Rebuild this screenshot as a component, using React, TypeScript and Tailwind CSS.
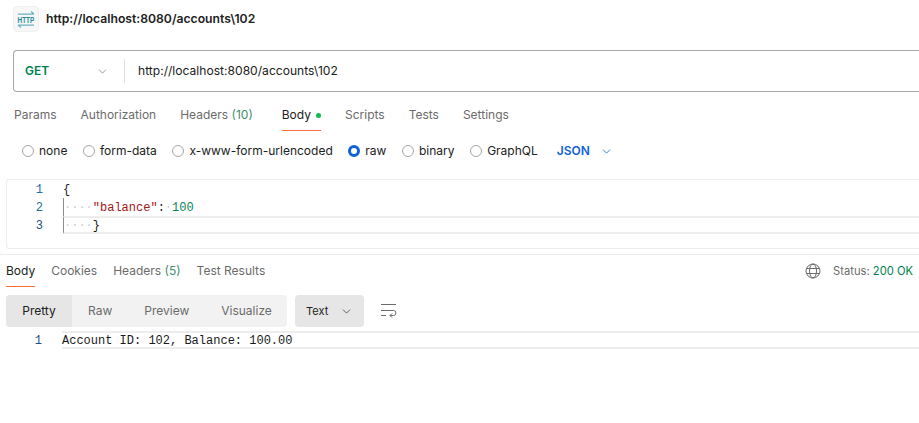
import { ChevronDown } from "lucide-react";

const requestTabs = ["Params", "Authorization", "Headers", "Body", "Scripts", "Tests", "Settings"];

const bodyTypes = ["none", "form-data", "x-www-form-urlencoded", "raw", "binary", "GraphQL"];

function HttpIcon() {
  return (
    <div className="flex h-[26px] w-[26px] items-center justify-center rounded-[4px] border border-[#efefef] bg-[#f7f7f7]">
      <svg width="18" height="18" viewBox="0 0 18 18" fill="none" stroke="#6bb3c0" strokeWidth="1.25">
        <path d="M1 4h16M14 1.500l3 2.500M1 15h16M4 17.500L1 15" />
        <text
          transform="translate(0.600 13) scale(1 1.35)"
          fontSize="6.400"
          fontWeight="700"
          fontFamily="Liberation Sans"
          stroke="none"
          fill="#2a8a9c"
        >
          HTTP
        </text>
      </svg>
    </div>
  );
}

function Radio({ checked }: { checked?: boolean }) {
  return checked ? (
    <span className="h-3 w-3 rounded-full border-[3.5px] border-[#0f62d6] bg-white" />
  ) : (
    <span className="h-3 w-3 rounded-full border border-[#a6a6a6] bg-white" />
  );
}

function WrapIcon() {
  return (
    <svg width="16" height="14" viewBox="0 0 16 14" fill="none" stroke="#6b6b6b" strokeWidth="1">
      <path d="M0 0.500h15M0 6.500h12.500a2.500 2.500 0 0 1 0 5H9M11 9.500l-2 2 2 2M0 11.500h5" />
    </svg>
  );
}

function GlobeIcon() {
  return (
    <svg width="16" height="16" viewBox="0 0 16 16" fill="none" stroke="#6b6b6b" strokeWidth="1">
      <circle cx="8" cy="8" r="7" />
      <ellipse cx="8" cy="8" rx="3.500" ry="7" />
      <path d="M1.500 5.500h13M1.500 10.500h13" />
    </svg>
  );
}

export default function App() {
  return (
    <div className="h-[423px] w-[919px] overflow-hidden bg-white font-['Inter',sans-serif] text-xs text-[#6b6b6b]">
      <div className="flex items-center gap-[7px] pl-[13px] pt-[6px]">
        <HttpIcon />
        <span className="text-[12.2px] font-semibold text-[#212121]">http://localhost:8080/accounts\102</span>
      </div>

      <div className="ml-[13px] mt-[18px] flex h-[42px] items-center rounded-l-[4px] border border-r-0 border-[#a8a8a8]">
        <span className="ml-[11px] w-[71px] font-semibold text-[#007f4f]">GET</span>
        <ChevronDown size={13} strokeWidth={1.25} className="text-[#6b6b6b]" />
        <div className="ml-[15px] h-[24px] w-px bg-[#e0e0e0]" />
        <span className="ml-[13px] text-[12.1px] text-[#212121]">http://localhost:8080/accounts\102</span>
      </div>

      <div className="mt-[11px] flex h-[28px] items-center pl-[14px]">
        {requestTabs.map((tab) => (
          <div
            key={tab}
            className={
              tab === "Body"
                ? "relative ml-[29px] flex h-full items-center pb-[4px]"
                : tab === "Params"
                  ? "relative flex h-full items-center pb-[4px]"
                  : "relative ml-[24px] flex h-full items-center pb-[4px]"
            }
          >
            {tab === "Body" ? (
              <>
                <span className="text-[#212121]">Body</span>
                <span className="ml-[5px] h-[5px] w-[5px] rounded-full bg-[#0cbb52]" />
                <span className="absolute bottom-0 left-0 right-0 h-px bg-[#ff6c37]" />
              </>
            ) : tab === "Headers" ? (
              <span>
                Headers <span className="text-[#3f8f6f]">(10)</span>
              </span>
            ) : (
              <span>{tab}</span>
            )}
          </div>
        ))}
      </div>

      <div className="mt-[12px] flex h-[16px] items-center pl-[22px]">
        <div className="flex items-center gap-[15.6px]">
          {bodyTypes.map((type) => (
            <label key={type} className="flex items-center gap-[5px] text-[#212121]">
              <Radio checked={type === "raw"} />
              {type}
            </label>
          ))}
        </div>
        <span className="ml-[19px] font-semibold text-[#0f62d6]">JSON</span>
        <ChevronDown size={13} strokeWidth={1.5} className="ml-[10px] text-[#0f62d6]" />
      </div>

      <div className="ml-[6px] mt-[20px] h-[70px] rounded-l-[3px] border border-r-0 border-[#ededed] font-['Liberation_Mono',monospace] text-xs leading-[20px]">
        <div className="flex h-[18px]">
          <span className="w-[36px] text-right text-[#1e6fa0]">1</span>
          <span className="ml-[20px] text-[#1a1a1a]">{"{"}</span>
        </div>
        <div className="flex h-[18px]">
          <span className="w-[36px] text-right text-[#1e6fa0]">2</span>
          <div className="ml-[20px] flex-1 border-l border-[#8c8c8c]">
            <span className="text-[#cfcfcf]">····</span>
            <span className="text-[#a31515]">"balance"</span>
            <span className="text-[#1a1a1a]">:</span>
            <span className="text-[#cfcfcf]">·</span>
            <span className="text-[#098658]">100</span>
          </div>
        </div>
        <div className="flex h-[18px]">
          <span className="w-[36px] text-right text-[#1a4f80]">3</span>
          <div className="ml-[20px] flex-1 border-y-2 border-l border-[#ededed] border-l-[#8c8c8c] leading-[16px]">
            <span className="text-[#cfcfcf]">····</span>
            <span className="text-[#1a1a1a]">{"}"}</span>
          </div>
        </div>
      </div>

      <div className="mt-[5px] border-t border-[#ededed]">
        <div className="flex h-[32px] items-center pl-[6px] pr-[6px]">
          <div className="relative flex h-full items-center text-[#212121]">
            Body
            <span className="absolute bottom-0 left-0 right-0 h-px bg-[#ff6c37]" />
          </div>
          <span className="ml-[16px]">Cookies</span>
          <span className="ml-[16px]">
            Headers <span className="text-[#3f8f6f]">(5)</span>
          </span>
          <span className="ml-[16px]">Test Results</span>
          <div className="ml-auto">
            <GlobeIcon />
          </div>
          <span className="ml-[12px] text-[11.2px]">
            Status: <span className="text-[#007f4f]">200 OK</span>
          </span>
        </div>

        <div className="ml-[6px] mt-[8px] flex items-center">
          <div className="flex h-[32px] w-[281px] items-center rounded-[4px] bg-[#f2f2f2]">
            <span className="flex h-full w-[66px] items-center justify-center rounded-l-[4px] bg-[#e6e6e6] text-[#212121]">
              Pretty
            </span>
            <span className="ml-[16px]">Raw</span>
            <span className="ml-[32px]">Preview</span>
            <span className="ml-[32px]">Visualize</span>
          </div>
          <div className="ml-[8px] flex h-[32px] w-[69px] items-center rounded-[4px] bg-[#e6e6e6] pl-[11px] text-[11px] text-[#212121]">
            Text
            <ChevronDown size={13} strokeWidth={1.25} className="ml-[12px]" />
          </div>
          <div className="ml-[17px]">
            <WrapIcon />
          </div>
        </div>

        <div className="mt-[4px] flex font-['Liberation_Mono',monospace] text-xs leading-[20px]">
          <span className="w-[42px] text-right text-[#1a4f80]">1</span>
          <div className="ml-[20px] h-[18px] flex-1 border-y-2 border-[#ededed] leading-[16px] text-[#1a1a1a]">
            Account ID: 102, Balance: 100.00
          </div>
        </div>
      </div>
    </div>
  );
}
